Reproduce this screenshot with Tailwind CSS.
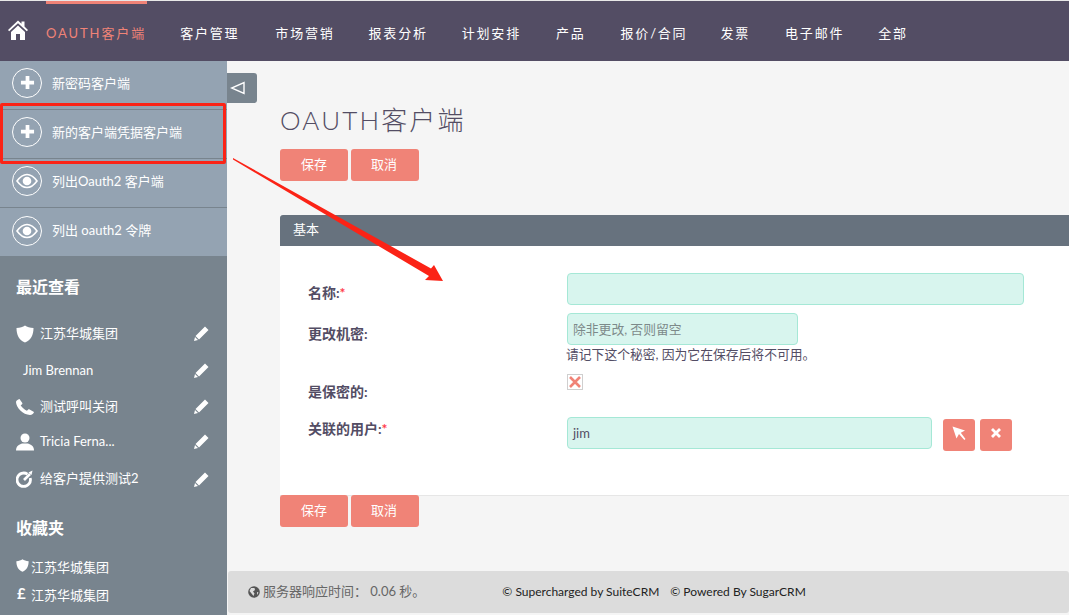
<!DOCTYPE html>
<html><head><meta charset="utf-8">
<script src="https://cdn.jsdelivr.net/npm/@tailwindcss/browser@4"></script></head>
<body class="m-0 overflow-hidden">
<div class="relative w-[1069px] h-[615px] overflow-hidden flex flex-col bg-[#f5f5f5] font-['Lato','Noto_Sans_CJK_SC',sans-serif] text-[13px] text-[#534d64]">
<!-- header -->
<header class="relative h-[61px] shrink-0 bg-[#534d64] border-t border-[#e8e8e8] flex items-center pt-[6px] text-white text-[13px] tracking-[1.8px]">
  <div class="absolute left-[46px] top-0 w-[101px] h-[3px] bg-[#f08377]"></div>
  <svg class="ml-[8px] w-[20px] h-[20px] mb-[8px]" viewBox="0 0 20 20" fill="#fff"><path d="M10 0.5 13.5 3.8V1.5H16.5V6.6L20 10 18.8 11.3 10 3.2 1.2 11.3 0 10Z M3 12 10 5.4 17 12V20H12V14H8V20H3Z"/></svg>
  <span class="ml-[18px] text-[#f08377] tracking-[1.9px]">OAUTH客户端</span>
  <span class="ml-[34px]">客户管理</span>
  <span class="ml-[36px]">市场营销</span>
  <span class="ml-[34px]">报表分析</span>
  <span class="ml-[34px]">计划安排</span>
  <span class="ml-[35px]">产品</span>
  <span class="ml-[35px]">报价/合同</span>
  <span class="ml-[33px]">发票</span>
  <span class="ml-[35px]">电子邮件</span>
  <span class="ml-[34px]">全部</span>
</header>
<div class="flex flex-1 min-h-0">
<!-- sidebar -->
<aside class="w-[227px] shrink-0 bg-[#78848e] text-white flex flex-col">
  <nav class="bg-[#94a3b2] text-[13px]">
    <div class="h-[49px] border-b border-[#78848e] flex items-center pl-[12px] gap-[10px] pb-[5px]">
      <span class="w-[30px] h-[30px] rounded-full border border-white flex items-center justify-center"><svg class="w-[15px] h-[15px]" viewBox="0 0 16 16" fill="#fff"><path d="M6 1h4v5h5v4h-5v5H6v-5H1V6h5z"/></svg></span><span class="mt-[2px]">新密码客户端</span>
    </div>
    <div class="h-[49px] border-b border-[#78848e] flex items-center pl-[12px] gap-[10px] pb-[5px]">
      <span class="w-[30px] h-[30px] rounded-full border border-white flex items-center justify-center"><svg class="w-[15px] h-[15px]" viewBox="0 0 16 16" fill="#fff"><path d="M6 1h4v5h5v4h-5v5H6v-5H1V6h5z"/></svg></span><span class="mt-[2px]">新的客户端凭据客户端</span>
    </div>
    <div class="h-[49px] border-b border-[#78848e] flex items-center pl-[12px] gap-[10px] pb-[5px]">
      <span class="w-[30px] h-[30px] rounded-full border border-white flex items-center justify-center"><svg class="w-[22px] h-[16px]" viewBox="0 0 22 16"><path d="M1 8C5 2.5 8 1.5 11 1.5S17 2.5 21 8C17 13.5 14 14.5 11 14.5S5 13.5 1 8Z" fill="none" stroke="#fff" stroke-width="1.6"/><circle cx="11" cy="8" r="4.3" fill="#fff"/></svg></span><span class="mt-[2px]">列出Oauth2 客户端</span>
    </div>
    <div class="h-[48px] flex items-center pl-[12px] gap-[10px] pb-[3px]">
      <span class="w-[30px] h-[30px] rounded-full border border-white flex items-center justify-center"><svg class="w-[22px] h-[16px]" viewBox="0 0 22 16"><path d="M1 8C5 2.5 8 1.5 11 1.5S17 2.5 21 8C17 13.5 14 14.5 11 14.5S5 13.5 1 8Z" fill="none" stroke="#fff" stroke-width="1.6"/><circle cx="11" cy="8" r="4.3" fill="#fff"/></svg></span><span>列出 oauth2 令牌</span>
    </div>
  </nav>
  <h3 class="mt-[20px] ml-[16px] text-[16px] leading-[22px] font-bold">最近查看</h3>
  <ul class="mt-[18px] text-[13px]">
    <li class="relative h-[36px] flex items-center pl-[16px] gap-[6px]">
      <svg class="w-[18px] h-[18px]" viewBox="0 0 18 18" fill="#fff"><path d="M9 0.5C11 2 14 3 17.5 3C17.5 10 15 15 9 17.5C3 15 0.5 10 0.5 3C4 3 7 2 9 0.5Z"/></svg><span>江苏华城集团</span>
      <svg class="absolute left-[194px] top-[10px] w-[15px] h-[15px]" viewBox="0 0 15 15" fill="#fff"><path d="M11 0.5 14.5 4 5 13.5 1.5 10Z M1 11 4 14 0 15Z"/></svg>
    </li>
    <li class="relative h-[38px] flex items-center pl-[23px]">
      <span>Jim Brennan</span>
      <svg class="absolute left-[194px] top-[11px] w-[15px] h-[15px]" viewBox="0 0 15 15" fill="#fff"><path d="M11 0.5 14.5 4 5 13.5 1.5 10Z M1 11 4 14 0 15Z"/></svg>
    </li>
    <li class="relative h-[33px] flex items-center pl-[16px] gap-[6px]">
      <svg class="w-[18px] h-[16px]" preserveAspectRatio="none" viewBox="0 0 18 18" fill="#fff"><path d="M3.5 0 6.3 4.6C6.6 5.3 6.3 5.8 5.8 6.2L4.7 7.1C5.6 9.2 8.5 12.2 10.9 13.3L12 12.1C12.4 11.6 13 11.4 13.6 11.8L18 14.5C17.9 16 16 18 14 18C7 18 0 9.500 0 3.500C0 2 1.800 0.300 3.500 0Z"/></svg><span>测试呼叫关闭</span>
      <svg class="absolute left-[194px] top-[9px] w-[15px] h-[15px]" viewBox="0 0 15 15" fill="#fff"><path d="M11 0.5 14.5 4 5 13.5 1.5 10Z M1 11 4 14 0 15Z"/></svg>
    </li>
    <li class="relative h-[37px] flex items-center pl-[16px] gap-[6px]">
      <svg class="w-[18px] h-[18px]" viewBox="0 0 18 18" fill="#fff"><circle cx="9" cy="5" r="4.5"/><path d="M0 17.5C0 13 3 11.5 6 10.5H12C15 11.5 18 13 18 17.5Z"/></svg><span>Tricia Ferna...</span>
      <svg class="absolute left-[194px] top-[11px] w-[15px] h-[15px]" viewBox="0 0 15 15" fill="#fff"><path d="M11 0.5 14.500 4 5 13.500 1.500 10Z M1 11 4 14 0 15Z"/></svg>
    </li>
    <li class="relative h-[38px] flex items-center pl-[16px] gap-[6px]">
      <svg class="w-[18px] h-[18px]" viewBox="0 0 18 18" fill="none" stroke="#fff" stroke-width="2.8"><path d="M11.500 4.200A6.700 6.700 0 1 0 14.200 8"/><path d="M8 10 14 4" stroke-width="2.6"/><path d="M12.500 2.500 16.500 0.500 15.500 5Z" fill="#fff" stroke="none"/></svg><span>给客户提供测试2</span>
      <svg class="absolute left-[194px] top-[12px] w-[15px] h-[15px]" viewBox="0 0 15 15" fill="#fff"><path d="M11 0.5 14.5 4 5 13.5 1.5 10Z M1 11 4 14 0 15Z"/></svg>
    </li>
  </ul>
  <h3 class="mt-[19px] ml-[16px] text-[16px] leading-[22px] font-bold">收藏夹</h3>
  <ul class="mt-[15px] text-[13px]">
    <li class="h-[28px] flex items-center pl-[16px] gap-[2px]"><svg class="w-[13px] h-[13px] mb-[6px]" viewBox="0 0 18 18" fill="#fff"><path d="M9 0.5C11 2 14 3 17.5 3C17.5 10 15 15 9 17.5C3 15 0.5 10 0.5 3C4 3 7 2 9 0.5Z"/></svg><span>江苏华城集团</span></li>
    <li class="h-[28px] flex items-center pl-[17px] gap-[4px]"><span class="font-bold text-[15px] leading-[15px] mb-[5px] w-[10px]">£</span><span>江苏华城集团</span></li>
  </ul>
</aside>
<!-- main -->
<main class="flex-1 min-w-0 flex flex-col relative">
  <button class="absolute left-0 top-[12px] w-[30px] h-[30px] bg-[#78848e] rounded-r-[3px] flex items-center justify-start pl-[3px]"><svg class="w-[15px] h-[14px]" viewBox="0 0 15 14" fill="none" stroke="#fff" stroke-width="1.4"><path d="M14 1.500V12.500L1.500 7Z"/></svg></button>
  <div class="flex-1 pl-[53px]">
    <h1 class="mt-[44px] text-[26px] leading-[30px] font-light tracking-[2.15px] text-[#534d64]">OAUTH客户端</h1>
    <div class="mt-[14px] flex gap-[3px]">
      <button class="w-[68px] h-[32px] rounded-[3px] bg-[#f08377] text-white text-[13px]">保存</button>
      <button class="w-[68px] h-[32px] rounded-[3px] bg-[#f08377] text-white text-[13px] pr-[2px]">取消</button>
    </div>
    <section class="mt-[34px] bg-white border-b border-[#e6e6e6]">
      <div class="h-[31px] bg-[#67727e] text-white flex items-center pl-[13px] pb-[2px] rounded-tl-[3px]">基本</div>
      <div class="h-[249px] pt-[27px] flex flex-col">
        <div class="flex h-[40px]">
          <div class="w-[287px] pl-[28px] pt-[11px] font-bold text-[14px] leading-[18px]">名称:<span class="text-[#ff3b4e]">*</span></div>
          <div class="w-[457px] h-[32px] bg-[#d8f5ee] border border-[#a5e8d6] rounded-[4px]"></div>
        </div>
        <div class="flex h-[61px]">
          <div class="w-[287px] pl-[28px] pt-[12px] font-bold text-[14px] leading-[18px]">更改机密:</div>
          <div>
            <div class="w-[231px] h-[32px] bg-[#d8f5ee] border border-[#a5e8d6] rounded-[4px] pl-[5px] pt-[1px] flex items-center text-[12.8px] text-[#7d8a8a]">除非更改, 否则留空</div>
            <p class="text-[12.8px] leading-[16px] mt-[1px] -ml-[1px] text-[#534d64]">请记下这个秘密, 因为它在保存后将不可用。</p>
          </div>
        </div>
        <div class="flex h-[43px]">
          <div class="w-[287px] pl-[28px] pt-[9px] font-bold text-[14px] leading-[18px]">是保密的:</div>
          <div class="w-[16px] h-[16px] border border-[#cfcfcf] bg-white flex items-center justify-center"><svg class="w-[12px] h-[12px]" viewBox="0 0 12 12" stroke="#f08377" stroke-width="2.6"><path d="M1 1 11 11M11 1 1 11"/></svg></div>
        </div>
        <div class="flex">
          <div class="w-[287px] pl-[28px] pt-[3px] font-bold text-[14px] leading-[18px]">关联的用户:<span class="text-[#ff3b4e]">*</span></div>
          <div class="w-[365px] h-[32px] bg-[#d8f5ee] border border-[#a5e8d6] rounded-[4px] pl-[5px] pt-[1px] flex items-center">jim</div>
          <button class="ml-[11px] mt-[2px] w-[32px] h-[32px] rounded-[3px] bg-[#f08377] flex items-center justify-center"><svg class="w-[14px] h-[15px] mb-[3px]" viewBox="0 0 14 15" fill="#fff"><path d="M0.5 0.5 13 4.500 8.800 6.800 13.500 13 12.300 14 7 8 4.500 12.500Z"/></svg></button>
          <button class="ml-[5px] mt-[2px] w-[32px] h-[32px] rounded-[3px] bg-[#f08377] flex items-center justify-center"><svg class="w-[10px] h-[10px] mb-[4px]" viewBox="0 0 10 10" stroke="#fff" stroke-width="2.8"><path d="M1 1 9 9M9 1 1 9"/></svg></button>
        </div>
      </div>
    </section>
    <div class="flex gap-[3px] -mt-[1px]">
      <button class="w-[68px] h-[32px] rounded-[3px] bg-[#f08377] text-white text-[13px]">保存</button>
      <button class="w-[68px] h-[32px] rounded-[3px] bg-[#f08377] text-white text-[13px] pr-[2px]">取消</button>
    </div>
  </div>
  <footer class="h-[42px] mb-[2px] ml-[1px] rounded-[3px] shrink-0 bg-[#dcdcdc] flex items-center pl-[20px] text-[#555]">
    <svg class="w-[12px] h-[12px] mr-[3px]" viewBox="0 0 12 12"><circle cx="6" cy="6" r="5.8" fill="#555"/><path d="M3 2 6.5 2 7 4 5 5.5 6.5 7.5 5.5 10 3.5 7.5 1.5 5Z M9 6 10.500 6.500 9 9Z" fill="#dcdcdc"/></svg>
    <span class="text-[13px] text-[#666]">服务器响应时间： 0.06 秒。</span>
    <span class="ml-[77px] text-[12px] text-[#222]">© Supercharged by SuiteCRM</span>
    <span class="ml-[11px] text-[12px] text-[#222]">© Powered By SugarCRM</span>
  </footer>
</main>
</div>
<!-- annotations -->
<div class="absolute left-0 top-[103px] w-[226px] h-[61px] border-[3px] border-[#fb2316] rounded-[2px]"></div>
<svg class="absolute left-0 top-0 pointer-events-none" width="1069" height="615" viewBox="0 0 1069 615"><path d="M233 158 431 268.500 434 265 443 281 425 280 429 276 233 159.500Z" fill="#fb2316"/></svg>
</div>
</body></html>
